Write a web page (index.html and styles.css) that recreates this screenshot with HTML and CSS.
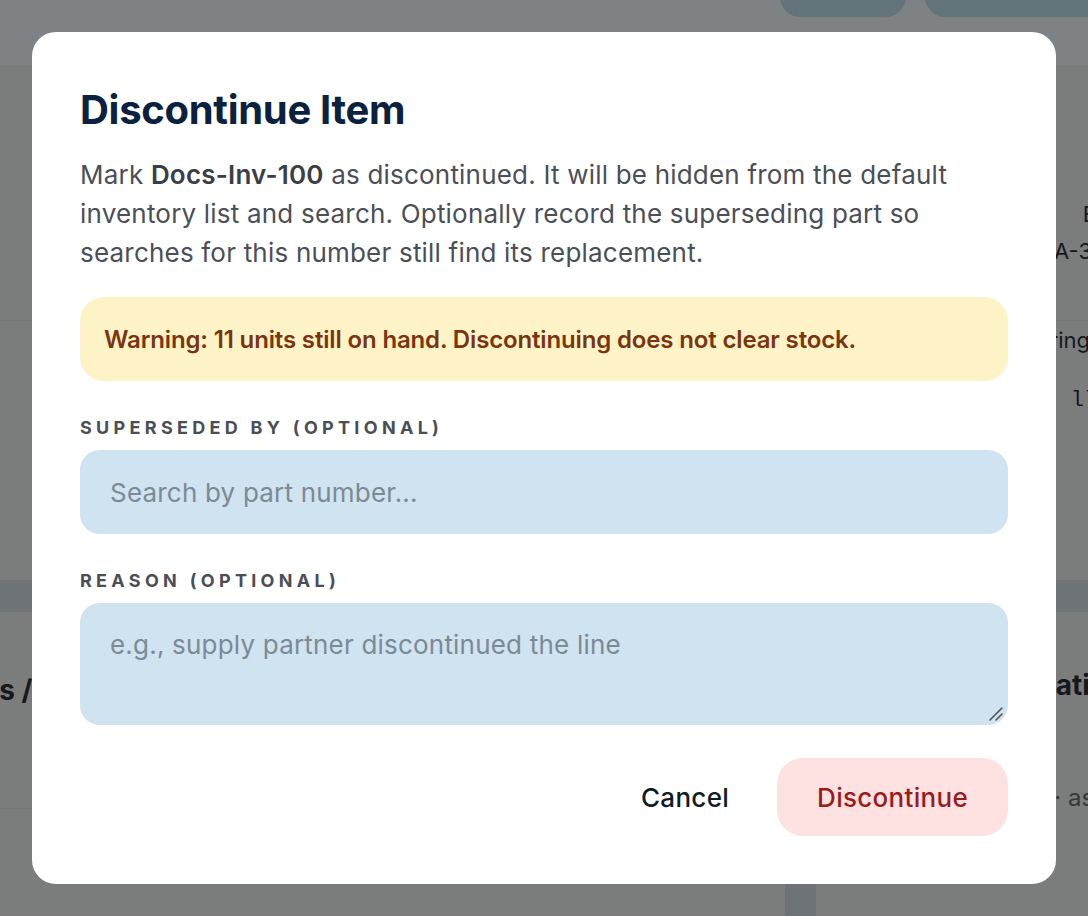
FILE: index.html
```html
<!DOCTYPE html>
<html lang="en">
<head>
    <meta charset="UTF-8">
    <meta name="viewport" content="width=device-width, initial-scale=1.0">
    <title>Inventory - Docs-Inv-100</title>
    <link rel="stylesheet" href="styles.css">
</head>
<body>
    <div class="page">
        <header class="topbar">
            <div class="top-actions">
                <span class="pill pill-edit"></span>
                <span class="pill pill-more"></span>
            </div>
        </header>

        <main class="content">
            <section class="card card-specs">
                <div class="spec-group">
                    <div class="spec-row"><span class="spec-value">Electrical Parts</span></div>
                    <div class="spec-row"><span class="spec-value">A-3340-0712-RW</span></div>
                </div>
                <div class="spec-group">
                    <div class="spec-row"><span class="spec-value">Spring contact brass</span></div>
                    <div class="spec-row"><span class="spec-value mono">ll-0917-042</span></div>
                </div>
            </section>

            <div class="card-row">
                <section class="card card-notes">
                    <h2 class="card-title">Notes / History</h2>
                    <div class="card-divider"></div>
                </section>
                <section class="card card-location">
                    <h2 class="card-title">Location</h2>
                    <p class="card-text">Bin B-12 &middot; as of last count</p>
                </section>
            </div>
        </main>
    </div>

    <!-- Discontinue dialog -->
    <div class="backdrop">
        <div class="modal">
            <h1 class="modal-title">Discontinue Item</h1>
            <p class="modal-text">
                Mark <strong>Docs-Inv-100</strong> as discontinued. It will be hidden from the default
                inventory list and search. Optionally record the superseding part so
                searches for this number still find its replacement.
            </p>

            <div class="warning">Warning: 11 units still on hand. Discontinuing does not clear stock.</div>

            <div class="field">
                <label class="field-label" for="superseded">Superseded by (optional)</label>
                <input class="field-input" id="superseded" type="text" placeholder="Search by part number...">
            </div>

            <div class="field">
                <label class="field-label" for="reason">Reason (optional)</label>
                <div class="textarea-wrap">
                    <textarea class="field-input field-textarea" id="reason" placeholder="e.g., supply partner discontinued the line"></textarea>
                    <svg class="grip" width="14" height="14" viewBox="0 0 14 14" aria-hidden="true">
                        <path d="M1 13 L13 1 M7 13 L13 7" stroke="#4f5459" stroke-width="1.6" stroke-linecap="round"/>
                    </svg>
                </div>
            </div>

            <div class="modal-actions">
                <button class="btn btn-ghost" type="button">Cancel</button>
                <button class="btn btn-danger" type="button">Discontinue</button>
            </div>
        </div>
    </div>
</body>
</html>
```

FILE: styles.css
```css
* {
    margin: 0;
    padding: 0;
    box-sizing: border-box;
}

html, body {
    height: 100%;
    overflow: hidden;
}

body {
    font-family: "Inter", "Noto Sans", sans-serif;
    background-color: #6e7377;
    color: #15191c;
}

/* Page behind the dialog (already dimmed) */
.page {
    width: 1280px;
}

.topbar {
    height: 65px;
    background-color: #7e8285;
    display: flex;
    justify-content: flex-end;
}

.top-actions {
    display: flex;
    gap: 19px;
    margin-right: 155px;
    margin-top: -24px;
}

.pill {
    height: 41px;
    border-radius: 24px;
    background-color: #62737a;
}

.pill-edit {
    width: 126px;
}

.pill-more {
    width: 200px;
}

.content {
    display: flex;
    flex-direction: column;
    gap: 32px;
}

.card {
    background-color: #7b7c7c;
}

.card-specs {
    height: 515px;
    padding-top: 130px;
    display: flex;
    flex-direction: column;
}

.spec-group {
    display: flex;
    flex-direction: column;
}

.spec-group + .spec-group {
    margin-top: 51px;
    border-top: 1px solid #737474;
}

.spec-row {
    height: 37px;
    padding-right: 42px;
    display: flex;
    align-items: center;
    justify-content: flex-end;
    font-size: 22px;
    white-space: nowrap;
}

.spec-group + .spec-group .spec-row:last-child {
    margin-top: 24px;
}

.mono {
    font-family: "Liberation Mono", "DejaVu Sans Mono", monospace;
    padding-right: 22px;
}

.card-row {
    display: flex;
    gap: 31px;
}

.card-notes {
    width: 785px;
    height: 400px;
    padding-top: 60px;
    display: flex;
    flex-direction: column;
}

.card-notes .card-title {
    margin-left: -66px;
}

.card-divider {
    margin-top: 100px;
    border-top: 1px solid #737474;
}

.card-location {
    flex: 1;
    height: 400px;
    padding: 55px 0 0 190px;
}

.card-title {
    font-size: 28px;
    font-weight: 700;
    line-height: 36px;
    white-space: nowrap;
}

.card-location .card-text {
    margin-top: 80px;
    margin-left: -52px;
    font-size: 24px;
    white-space: nowrap;
    color: #34383b;
}

/* Dialog */
.backdrop {
    position: fixed;
    inset: 0;
    display: flex;
    align-items: center;
    justify-content: center;
    padding: 32px;
}

.modal {
    width: 100%;
    background-color: #ffffff;
    border-radius: 24px;
    padding: 48px;
}

.modal-title {
    font-size: 40px;
    line-height: 60px;
    font-weight: 700;
    letter-spacing: -0.3px;
    color: #0b2140;
}

.modal-text {
    margin-top: 15px;
    font-size: 26px;
    line-height: 39px;
    letter-spacing: 0.2px;
    color: #4a4f58;
}

.modal-text strong {
    font-weight: 600;
    color: #3a3e45;
}

.warning {
    margin-top: 25px;
    height: 84px;
    display: flex;
    align-items: center;
    padding: 0 24px;
    border-radius: 24px;
    background-color: #fef3c7;
    color: #78350f;
    font-size: 24px;
    font-weight: 600;
    letter-spacing: -0.15px;
}

.field {
    display: flex;
    flex-direction: column;
    gap: 10px;
    margin-top: 35px;
}

.field-label {
    font-size: 18px;
    line-height: 24px;
    font-weight: 700;
    letter-spacing: 4.3px;
    text-transform: uppercase;
    color: #4a4e56;
}

.field-input {
    width: 100%;
    height: 84px;
    padding: 0 30px;
    border: none;
    border-radius: 20px;
    background-color: #cfe3f0;
    font-family: inherit;
    font-size: 26px;
    letter-spacing: 0.2px;
    color: #15191c;
    outline: none;
}

.field-input::placeholder {
    color: #7c8a95;
}

.textarea-wrap {
    position: relative;
    display: flex;
}

.field-textarea {
    height: 122px;
    padding: 22px 30px;
    line-height: 39px;
    resize: none;
}

/* resize grip drawn over the textarea corner */
.grip {
    position: absolute;
    right: 5px;
    bottom: 4px;
    pointer-events: none;
}

.modal-actions {
    margin-top: 33px;
    display: flex;
    justify-content: flex-end;
    gap: 8px;
}

.btn {
    height: 78px;
    padding: 0 40px;
    border: none;
    border-radius: 26px;
    font-family: inherit;
    font-size: 26px;
    font-weight: 500;
    letter-spacing: 0.3px;
    cursor: pointer;
}

.btn-ghost {
    background: transparent;
    color: #0f1c26;
}

.btn-danger {
    background-color: #fee2e2;
    color: #991b1b;
}
```
